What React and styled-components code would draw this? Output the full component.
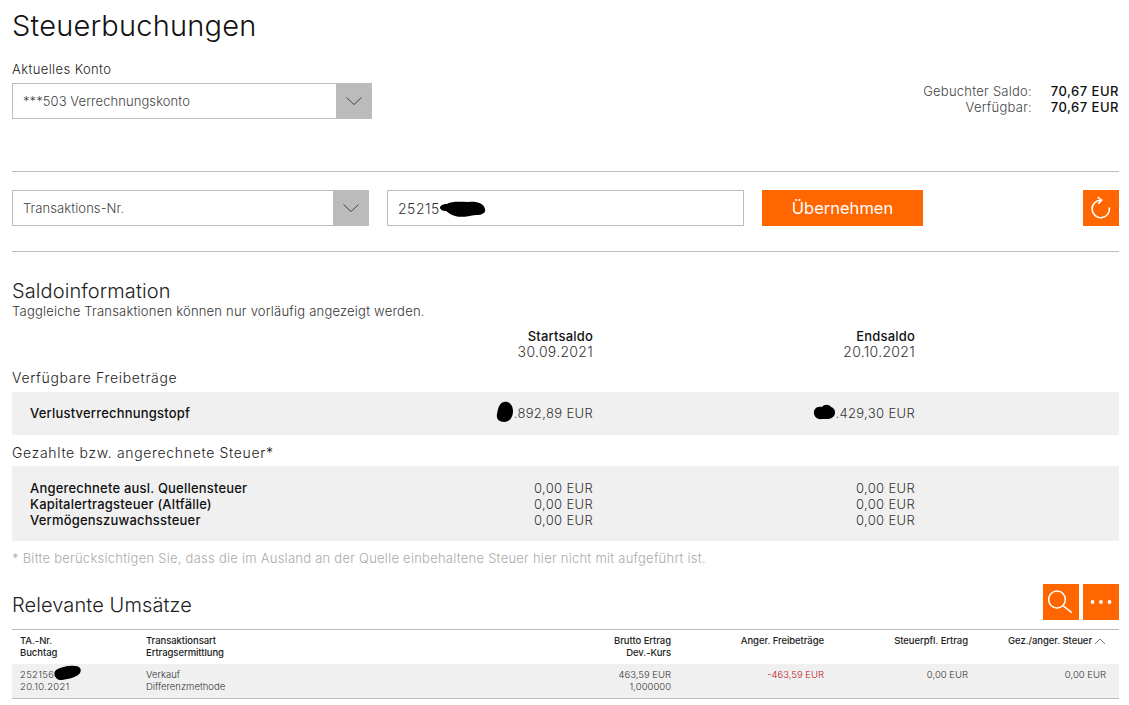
import React from "react";
import styled, { createGlobalStyle } from "styled-components";

const Global = createGlobalStyle`
  html, body { margin: 0; background: #fff; }
  body { font-family: Inter, "Liberation Sans", sans-serif; font-weight: 300; color: #222; }
  * { box-sizing: border-box; }
`;

const Page = styled.div`
  width: 1129px;
  height: 705px;
  padding: 0 10px 0 12px;
  overflow: hidden;
`;
const Title = styled.h1`
  margin: 0;
  padding-top: 9px;
  height: 62px;
  font-size: 29px;
  line-height: 34px;
  letter-spacing: 0.2px;
  font-weight: 300;
  color: #111;
`;
const AccountRow = styled.div`
  display: flex;
  justify-content: space-between;
  align-items: flex-end;
  height: 57px;
`;
const FieldLabel = styled.div`
  font-size: 13px;
  line-height: 15px;
  letter-spacing: 0.4px;
  height: 21px;
  color: #222;
`;
const SelectBox = styled.div`
  display: flex;
  align-items: center;
  width: ${(p) => p.$w}px;
  height: 36px;
  border: 1px solid #bbb;
  padding-left: 10px;
  font-size: 13px;
  letter-spacing: 0.08px;
  color: #444;
  position: relative;
`;
const SelectArrow = styled.div`
  position: absolute;
  top: -1px;
  right: -1px;
  width: 36px;
  height: 36px;
  background: #bbb;
  display: flex;
  align-items: center;
  justify-content: center;
`;
const Balance = styled.div`
  display: grid;
  grid-template-columns: auto 87px;
  font-size: 13px;
  line-height: 16px;
  margin-bottom: 4px;
`;
const BalanceLabel = styled.div`
  text-align: right;
  letter-spacing: 0.25px;
  color: #444;
`;
const BalanceValue = styled.div`
  text-align: right;
  font-weight: 500;
  letter-spacing: 0.5px;
  color: #111;
`;
const Rule = styled.hr`
  margin: ${(p) => p.$m};
  border: 0;
  border-top: 1px solid #bbb;
`;
const FilterRow = styled.div`
  display: flex;
  height: 36px;
`;
const TextField = styled.div`
  position: relative;
  display: flex;
  align-items: center;
  width: 357px;
  height: 36px;
  margin-left: 18px;
  border: 1px solid #bbb;
  padding-left: 10px;
  font-size: 14px;
  letter-spacing: 0.5px;
  color: #333;
`;
const PrimaryButton = styled.button`
  width: 161px;
  height: 36px;
  margin-left: 18px;
  margin-right: auto;
  border: 0;
  background: #ff6600;
  color: #fff;
  font: 400 16.5px Inter, sans-serif;
`;
const IconButton = styled.button`
  width: 36px;
  height: 36px;
  padding: 0;
  border: 0;
  background: #ff6600;
  display: flex;
  align-items: center;
  justify-content: center;
`;
const SectionTitle = styled.h2`
  margin: 0;
  font-size: 20px;
  line-height: 26px;
  letter-spacing: 0.1px;
  font-weight: 300;
  color: #222;
`;
const Hint = styled.div`
  font-size: 13px;
  line-height: 15px;
  letter-spacing: 0.22px;
  color: #333;
`;
const SaldoHead = styled.div`
  display: grid;
  grid-template-columns: 581px 322px;
  margin-top: 10px;
  font-size: 13px;
  line-height: 15px;
`;
const SaldoGrid = styled.div`
  display: grid;
  grid-template-columns: 300px 263px 322px;
  padding-left: 18px;
  font-size: 13px;
  line-height: 16px;
`;
const Head = styled.div`
  font-weight: ${(p) => (p.$bold ? 500 : 300)};
  font-size: ${(p) => (p.$bold ? 13 : 14)}px;
  letter-spacing: ${(p) => (p.$bold ? 0.2 : 0.3)}px;
  text-align: right;
  color: ${(p) => (p.$bold ? "#111" : "#333")};
`;
const SubTitle = styled.div`
  margin-top: ${(p) => p.$mt}px;
  height: ${(p) => p.$h}px;
  font-size: 14px;
  line-height: 17px;
  letter-spacing: 0.67px;
  color: #222;
`;
const GreyPanel = styled.div`
  background: #f0f0f0;
  height: ${(p) => p.$h}px;
  padding-bottom: ${(p) => p.$pb || 0}px;
  display: flex;
  align-items: center;
`;
const RowLabel = styled.div`
  font-weight: 500;
  letter-spacing: 0.2px;
  color: #111;
`;
const Amount = styled.div`
  position: relative;
  text-align: right;
  letter-spacing: 0.35px;
  color: #333;
`;
const Blot = styled.svg`
  position: absolute;
  left: ${(p) => p.$x}px;
  top: ${(p) => p.$y}px;
`;
const Footnote = styled.div`
  margin-top: 9px;
  font-size: 13px;
  line-height: 17px;
  letter-spacing: 0.25px;
  color: #aaa;
`;
const TableHeading = styled.div`
  display: flex;
  align-items: center;
  gap: 4px;
  margin-top: 17px;
  height: 36px;
`;
const TableTitle = styled(SectionTitle)`
  margin-right: auto;
  padding-top: 6px;
`;
const TableRow = styled.div`
  position: relative;
  display: grid;
  grid-template-columns: 126px 250px 275px 153px 144px 138px;
  height: 35px;
  margin-top: ${(p) => (p.$head ? 9 : 0)}px;
  padding: 5px 0 0 8px;
  background: ${(p) => (p.$head ? "#fff" : "#f0f0f0")};
  border-top: ${(p) => (p.$head ? "1px solid #bbb" : "0")};
  border-bottom: ${(p) => (p.$head ? "0" : "1px solid #bbb")};
  font-size: 9.5px;
  line-height: 12px;
  letter-spacing: ${(p) => (p.$head ? -0.06 : 0)}px;
  font-weight: ${(p) => (p.$head ? 500 : 300)};
  color: ${(p) => (p.$head ? "#222" : "#333")};
`;
const Cell = styled.div`
  position: relative;
  text-align: ${(p) => (p.$right ? "right" : "left")};
  padding-right: ${(p) => (p.$sort ? 14 : 0)}px;
  letter-spacing: ${(p) => (p.$wide ? "0.3px" : "inherit")};
  color: ${(p) => (p.$neg ? "#c01020" : "inherit")};
  white-space: nowrap;
`;
const SortMark = styled.svg`
  position: absolute;
  right: 0;
  top: 3px;
`;

const Chevron = () => (
  <svg width="18" height="10" viewBox="0 0 18 10" fill="none" stroke="#444" strokeWidth="1">
    <path d="M1.5 1.5 9 8.5 16.5 1.5" />
  </svg>
);
const Refresh = () => (
  <svg width="22" height="24" viewBox="0 0 22 24" fill="none" stroke="#fff" strokeWidth="1.6">
    <path d="M11 4.3A8.7 8.7 0 1 0 19.3 11.3" />
    <path d="M7.7 1.2 11.7 4.2 8.3 7.6" />
  </svg>
);
const Search = () => (
  <svg width="26" height="26" viewBox="0 0 26 26" fill="none" stroke="#fff" strokeWidth="1.5">
    <circle cx="9" cy="10.5" r="8.4" />
    <path d="M15 16.6 23.7 23.7" />
  </svg>
);
const Dots = () => (
  <svg width="22" height="6" viewBox="0 0 22 6" fill="#fff">
    <circle cx="2.5" cy="3" r="1.9" />
    <circle cx="11" cy="3" r="1.9" />
    <circle cx="19.5" cy="3" r="1.9" />
  </svg>
);
const Ink = ({ x, y, w, h, d }) => (
  <Blot $x={x} $y={y} width={w} height={h} viewBox={`0 0 ${w} ${h}`} fill="#000">
    <path d={d} />
  </Blot>
);

const Select = ({ w, children }) => (
  <SelectBox $w={w}>
    {children}
    <SelectArrow>
      <Chevron />
    </SelectArrow>
  </SelectBox>
);

export default function App() {
  return (
    <Page>
      <Global />
      <Title>Steuerbuchungen</Title>
      <AccountRow>
        <div>
          <FieldLabel>Aktuelles Konto</FieldLabel>
          <Select w={360}>***503 Verrechnungskonto</Select>
        </div>
        <Balance>
          <BalanceLabel>Gebuchter Saldo:</BalanceLabel>
          <BalanceValue>70,67 EUR</BalanceValue>
          <BalanceLabel>Verfügbar:</BalanceLabel>
          <BalanceValue>70,67 EUR</BalanceValue>
        </Balance>
      </AccountRow>
      <Rule $m="52px 0 18px" />
      <FilterRow>
        <Select w={357}>Transaktions-Nr.</Select>
        <TextField>
          25215
          <Ink x={52} y={10} w={47} h={17} d="M0 6C2 3 5 3 7 3C12 0 20 1 28 1C36 0 44 2 45 8C46 12 42 14 36 14C28 15 22 17 15 15C11 14 9 12 6 10C3 10 0 9 0 6Z" />
        </TextField>
        <PrimaryButton>Übernehmen</PrimaryButton>
        <IconButton aria-label="Aktualisieren">
          <Refresh />
        </IconButton>
      </FilterRow>
      <Rule $m="25px 0 26px" />
      <SectionTitle>Saldoinformation</SectionTitle>
      <Hint>Taggleiche Transaktionen können nur vorläufig angezeigt werden.</Hint>
      <SaldoHead>
        <Head $bold>Startsaldo</Head>
        <Head $bold>Endsaldo</Head>
        <Head>30.09.2021</Head>
        <Head>20.10.2021</Head>
      </SaldoHead>
      <SubTitle $mt={10} $h={23}>Verfügbare Freibeträge</SubTitle>
      <GreyPanel $h={43} $pb={2}>
        <SaldoGrid>
          <RowLabel>Verlustverrechnungstopf</RowLabel>
          <Amount>
            <Ink x={166} y={-4} w={18} h={22} d="M8 1C13 0 17 4 17 10C17 16 14 21 8 21C3 21 0 18 1 13C2 8 3 2 8 1Z" />
            .892,89 EUR
          </Amount>
          <Amount>
            <Ink x={220} y={-1} w={23} h={17} d="M1 7C2 3 6 2 9 3C11 0 16 0 18 3C22 4 23 9 21 12C18 16 13 15 9 15C4 16 0 12 1 7Z" />
            .429,30 EUR
          </Amount>
        </SaldoGrid>
      </GreyPanel>
      <SubTitle $mt={9} $h={22}>Gezahlte bzw. angerechnete Steuer*</SubTitle>
      <GreyPanel $h={75}>
        <SaldoGrid>
          <RowLabel>Angerechnete ausl. Quellensteuer</RowLabel>
          <Amount>0,00 EUR</Amount>
          <Amount>0,00 EUR</Amount>
          <RowLabel>Kapitalertragsteuer (Altfälle)</RowLabel>
          <Amount>0,00 EUR</Amount>
          <Amount>0,00 EUR</Amount>
          <RowLabel>Vermögenszuwachssteuer</RowLabel>
          <Amount>0,00 EUR</Amount>
          <Amount>0,00 EUR</Amount>
        </SaldoGrid>
      </GreyPanel>
      <Footnote>* Bitte berücksichtigen Sie, dass die im Ausland an der Quelle einbehaltene Steuer hier nicht mit aufgeführt ist.</Footnote>
      <TableHeading>
        <TableTitle>Relevante Umsätze</TableTitle>
        <IconButton aria-label="Suchen">
          <Search />
        </IconButton>
        <IconButton aria-label="Mehr">
          <Dots />
        </IconButton>
      </TableHeading>
      <TableRow $head>
        <Cell>TA.-Nr.<br />Buchtag</Cell>
        <Cell>Transaktionsart<br />Ertragsermittlung</Cell>
        <Cell $right>Brutto Ertrag<br />Dev.-Kurs</Cell>
        <Cell $right>Anger. Freibeträge</Cell>
        <Cell $right>Steuerpfl. Ertrag</Cell>
        <Cell $right $sort>
          Gez./anger. Steuer
          <SortMark width="12" height="7" viewBox="0 0 12 7" fill="none" stroke="#777" strokeWidth="1">
            <path d="M1 6 6 1 11 6" />
          </SortMark>
        </Cell>
      </TableRow>
      <TableRow>
        <Cell $wide>
          252156
          <Ink x={33} y={-4} w={29} h={18} d="M3 5C8 2 16 0 22 1C27 1 29 4 27 8C24 12 16 14 9 15C3 16 -1 9 3 5Z" />
          <br />20.10.2021
        </Cell>
        <Cell>Verkauf<br />Differenzmethode</Cell>
        <Cell $right>463,59 EUR<br />1,000000</Cell>
        <Cell $right $neg>-463,59 EUR</Cell>
        <Cell $right>0,00 EUR</Cell>
        <Cell $right>0,00 EUR</Cell>
      </TableRow>
    </Page>
  );
}
